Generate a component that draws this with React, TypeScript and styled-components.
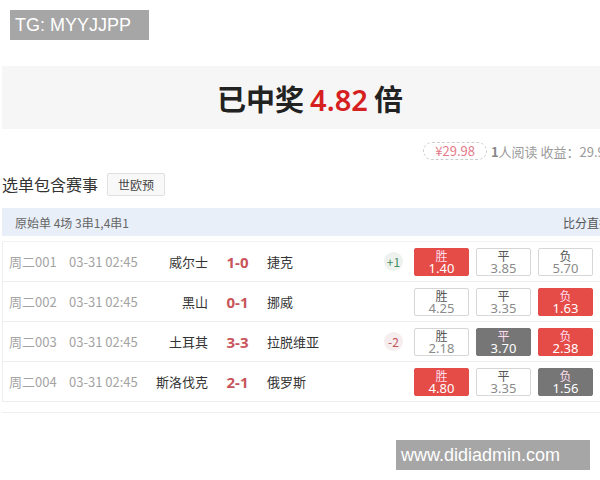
import React from "react";
import styled, { createGlobalStyle } from "styled-components";

const Global = createGlobalStyle`
  html, body { margin: 0; padding: 0; background: #fff; overflow: hidden; }
  body { font-family: "Noto Sans CJK SC", "Noto Sans", sans-serif; width: 600px; height: 480px; }
`;

const Page = styled.div`
  position: relative;
  width: 620px;
  height: 480px;
  padding-top: 66px;
  box-sizing: border-box;
`;

const Watermark = styled.div<{ $top?: number; $left: number; $w: number }>`
  position: absolute;
  top: ${(p) => p.$top}px;
  left: ${(p) => p.$left}px;
  width: ${(p) => p.$w}px;
  height: 30px;
  background: #a6a6a6;
  color: #fff;
  font-family: "Liberation Sans", Arial, sans-serif;
  font-size: 18px;
  line-height: 30px;
  padding-left: 5px;
  box-sizing: border-box;
  z-index: 2;
`;

const Header = styled.div`
  margin-left: 2px;
  height: 63px;
  background: #f6f6f6;
  display: flex;
  align-items: center;
  justify-content: center;
  padding-right: 2px;
`;

const Title = styled.h1`
  margin: 0;
  font-size: 29px;
  font-weight: 700;
  color: #222;
  letter-spacing: 0;
`;

const Multiple = styled.span`
  color: #d61f1f;
  margin: 0 6px;
  font-family: "Noto Sans", sans-serif;
  font-weight: 600;
`;

const PriceRow = styled.div`
  margin-top: 13px;
  height: 18px;
  display: flex;
  justify-content: flex-end;
  align-items: center;
  padding-right: 8px;
  white-space: nowrap;
  font-size: 13px;
  color: #9a9a9a;
`;

const Price = styled.span`
  border: 1px dashed #ccc;
  border-radius: 9px;
  height: 16px;
  line-height: 16px;
  padding: 0 11px;
  color: #e57b8a;
  font-size: 13px;
  margin-right: 4px;
`;

const Strong = styled.b`
  color: #888;
  font-weight: 700;
`;

const SectionRow = styled.div`
  margin-top: 12px;
  padding-left: 2px;
  display: flex;
  align-items: center;
  gap: 9px;
`;

const SectionTitle = styled.span`
  font-size: 16px;
  color: #333;
`;

const Tag = styled.span`
  height: 23px;
  box-sizing: border-box;
  border: 1px solid #e0e0e0;
  border-radius: 2px;
  background: #f8f8f8;
  font-size: 12px;
  color: #444;
  padding: 0 10px;
  line-height: 21px;
`;

const InfoBar = styled.div`
  margin: 12px 0 0 2px;
  height: 28px;
  background: #e8eff8;
  display: flex;
  align-items: center;
  justify-content: space-between;
  padding: 0 9px 0 13px;
  font-size: 12px;
  color: #666;
`;

const LinkText = styled.span`
  color: #555;
`;

const Table = styled.div`
  margin: 5px 0 0 2px;
  border-left: 1px solid #eee;
  border-top: 1px solid #f2f2f2;
`;

const Row = styled.div`
  height: 40px;
  box-sizing: border-box;
  border-bottom: 1px solid #eee;
  display: flex;
  align-items: center;
  padding-left: 6px;
  font-size: 13px;
`;

const Cell = styled.span<{ $w: number; $align?: string; $color?: string }>`
  width: ${(p) => p.$w}px;
  flex: none;
  text-align: ${(p) => p.$align || "left"};
  color: ${(p) => p.$color || "#a3a3a3"};
  white-space: nowrap;
`;

const Score = styled.span`
  width: 59px;
  flex: none;
  text-align: center;
  color: #c9545a;
  font-size: 15px;
  font-weight: 700;
  font-family: "Noto Sans", sans-serif;
`;

const HandicapSlot = styled.span`
  width: 30px;
  flex: none;
  display: flex;
`;

const Handicap = styled.span<{ $neg?: boolean }>`
  width: 19px;
  height: 19px;
  border-radius: 50%;
  background: ${(p) => (p.$neg ? "#f6eeee" : "#eef2ee")};
  color: ${(p) => (p.$neg ? "#c05058" : "#3f8f5f")};
  font-size: 12px;
  line-height: 19px;
  text-align: center;
`;

const Odds = styled.div`
  display: flex;
  gap: 7px;
`;

type Kind = "none" | "red" | "gray";

const OddBtn = styled.div<{ $kind: Kind }>`
  width: 55px;
  height: 28px;
  box-sizing: border-box;
  border-radius: 2px;
  border: 1px solid
    ${(p) => (p.$kind === "red" ? "#e54b47" : p.$kind === "gray" ? "#767676" : "#d6d6d6")};
  background: ${(p) => (p.$kind === "red" ? "#e54b47" : p.$kind === "gray" ? "#767676" : "#fff")};
  color: ${(p) => (p.$kind === "none" ? "#8a8a8a" : "#fff")};
  display: flex;
  flex-direction: column;
  align-items: center;
  justify-content: center;
  font-size: 13px;
  line-height: 13px;
`;

const OddLabel = styled.span<{ $kind: Kind }>`
  color: ${(p) => (p.$kind === "none" ? "#555" : "#fde")};
  font-size: 12px;
`;

const OddValue = styled.span`
  font-family: "Noto Sans", sans-serif;
  font-size: 13px;
`;

const Divider = styled.div`
  margin: 10px 0 0 2px;
  border-top: 1px solid #eee;
`;

const matches = [
  { no: "周二001", home: "威尔士", score: "1-0", away: "捷克", hc: "+1", odds: [["胜", "1.40", "red"], ["平", "3.85", "none"], ["负", "5.70", "none"]] },
  { no: "周二002", home: "黑山", score: "0-1", away: "挪威", hc: "", odds: [["胜", "4.25", "none"], ["平", "3.35", "none"], ["负", "1.63", "red"]] },
  { no: "周二003", home: "土耳其", score: "3-3", away: "拉脱维亚", hc: "-2", odds: [["胜", "2.18", "none"], ["平", "3.70", "gray"], ["负", "2.38", "red"]] },
  { no: "周二004", home: "斯洛伐克", score: "2-1", away: "俄罗斯", hc: "", odds: [["胜", "4.80", "red"], ["平", "3.35", "none"], ["负", "1.56", "gray"]] },
] as const;

export default function App() {
  return (
    <>
      <Global />
      <Page>
        <Watermark $top={10} $left={10} $w={139}>TG: MYYJJPP</Watermark>
        <Header>
          <Title>
            已中奖<Multiple>4.82</Multiple>倍
          </Title>
        </Header>
        <PriceRow>
          <Price>¥29.98</Price>
          <Strong>1</Strong>人阅读 收益：29.98
        </PriceRow>
        <SectionRow>
          <SectionTitle>选单包含赛事</SectionTitle>
          <Tag>世欧预</Tag>
        </SectionRow>
        <InfoBar>
          <span>原始单 4场 3串1,4串1</span>
          <LinkText>比分直播</LinkText>
        </InfoBar>
        <Table>
          {matches.map((m) => (
            <Row key={m.no}>
              <Cell $w={60}>{m.no}</Cell>
              <Cell $w={78}>03-31 02:45</Cell>
              <Cell $w={61} $align="right" $color="#333">{m.home}</Cell>
              <Score>{m.score}</Score>
              <Cell $w={117} $color="#333">{m.away}</Cell>
              <HandicapSlot>
                {m.hc && <Handicap $neg={m.hc.startsWith("-")}>{m.hc}</Handicap>}
              </HandicapSlot>
              <Odds>
                {m.odds.map(([l, v, k]) => (
                  <OddBtn key={l} $kind={k as Kind}>
                    <OddLabel $kind={k as Kind}>{l}</OddLabel>
                    <OddValue>{v}</OddValue>
                  </OddBtn>
                ))}
              </Odds>
            </Row>
          ))}
        </Table>
        <Divider />
        <Watermark $top={440} $left={396} $w={194}>www.didiadmin.com</Watermark>
      </Page>
    </>
  );
}
